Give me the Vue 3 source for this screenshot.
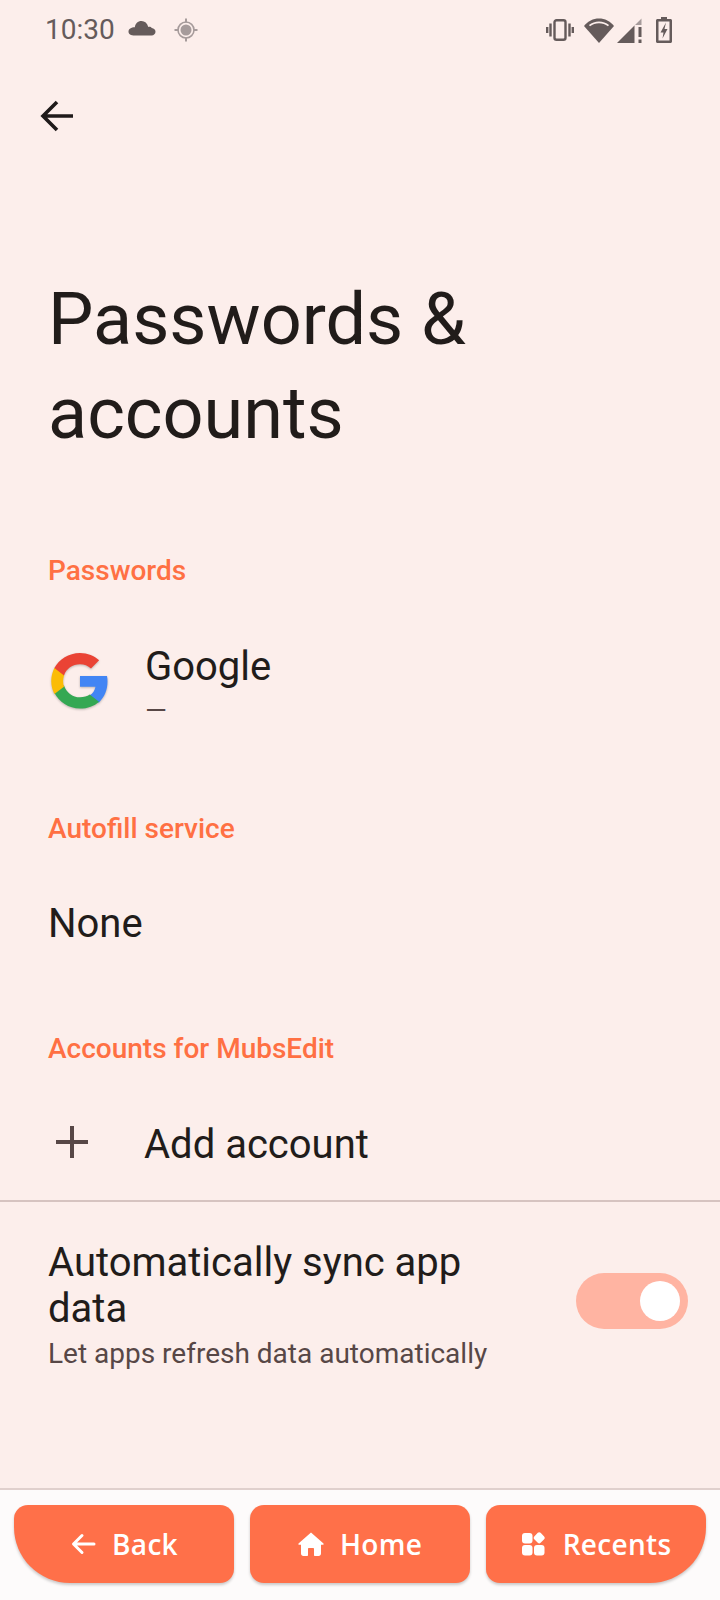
<template>
  <div class="screen">
    <div class="status">
      <div class="status-left">
        <span class="time">10:30</span>
        <svg class="cloud" width="28" height="16" viewBox="0 0 28 16"><path d="M7 15.500h16.500c2.400 0 4-1.700 4-3.700 0-2.100-1.600-3.600-3.700-3.800C23 6.800 21.500 6.500 20.300 7 19.300 3 16.800 1 13.500 1 9.800 1 7.200 3.500 6.800 7.300 3.200 7.300.5 8.900.5 11.700c0 2.300 2.200 3.800 6.500 3.800z" fill="#655b5b"/></svg>
        <svg class="gps" width="24" height="24" viewBox="0 0 24 24"><circle cx="12" cy="12" r="5.500" fill="#a69b9b"/><circle cx="12" cy="12" r="8" fill="none" stroke="#a69b9b" stroke-width="1.600"/><path d="M12 .5v4M12 19.500v4M.5 12h4M19.500 12h4" stroke="#a69b9b" stroke-width="2"/></svg>
      </div>
      <div class="status-right">
        <svg class="vib" width="28" height="22" viewBox="0 0 28 22"><rect x="8.500" y="1.200" width="11" height="19.600" rx="2" fill="none" stroke="#655b5b" stroke-width="2.400"/><path d="M4.500 4.500v13M1.200 8v6M23.500 4.500v13M26.800 8v6" stroke="#655b5b" stroke-width="2.400"/></svg>
        <svg class="wifi" width="30" height="25" viewBox="0 0 30 25"><path d="M0 8C4 3 9 .5 15 .5S26 3 30 8L15 25z" fill="#655b5b"/><path d="M5.500 7.600C8.200 5.400 11.300 4.300 15 4.300s6.800 1.100 9.500 3.300" fill="none" stroke="#fceeeb" stroke-width="1.800"/></svg>
        <svg class="signal" width="25" height="25" viewBox="0 0 25 25"><path d="M0 25 L17.500 7.500V25z" fill="#655b5b"/><path d="M17.500 7.500 24.500 .5v6.500h-7z" fill="#a69b9b"/><rect x="21.500" y="9" width="3" height="10" fill="#655b5b"/><rect x="21.500" y="21.500" width="3" height="3.500" fill="#655b5b"/></svg>
        <svg class="batt" width="16" height="26" viewBox="0 0 16 26"><path d="M5 0h6v2h3.500c.8 0 1.500.7 1.500 1.500v21c0 .8-.7 1.500-1.500 1.500h-13C.7 26 0 25.300 0 24.500v-21C0 2.700.7 2 1.500 2H5z" fill="#655b5b"/><rect x="2.500" y="4.500" width="11" height="19" fill="#fceeeb"/><path d="M10 5.500 4.500 15.500h3l-1 6 5-9.500h-3z" fill="#655b5b"/></svg>
      </div>
    </div>

    <div class="toolbar">
      <svg width="34" height="34" viewBox="0 0 34 34"><path d="M33 17H4M17 3 3 17l14 14" fill="none" stroke="#1f1a1a" stroke-width="3.600"/></svg>
    </div>

    <h1 class="title">Passwords &amp;<br />accounts</h1>

    <div class="section-label first">Passwords</div>
    <div class="row google">
      <svg class="g-logo" width="60" height="60" viewBox="0 0 48 48">
        <path fill="#4285F4" d="M46 24.500c0-1.600-.1-3.100-.4-4.500H24v8.500h12.400c-.5 2.900-2.100 5.300-4.600 6.900v5.700h7.400C43.500 36.700 46 31.100 46 24.500z"/>
        <path fill="#34A853" d="M24 46c6.200 0 11.400-2 15.200-5.500l-7.400-5.700c-2 1.400-4.700 2.200-7.800 2.200-6 0-11-4-12.800-9.500H3.500v5.900C7.200 40.800 15 46 24 46z"/>
        <path fill="#FBBC05" d="M11.200 28.500c-.5-1.400-.7-2.900-.7-4.500s.3-3.100.7-4.500v-5.900H3.500C2 16.600 1 20.200 1 24s1 7.400 2.500 10.400z"/>
        <path fill="#EA4335" d="M24 10.500c3.400 0 6.400 1.200 8.800 3.400l6.500-6.500C35.400 3.800 30.200 1.500 24 1.500 15 1.500 7.200 6.700 3.500 13.600l7.700 5.900C13 14 18 10.500 24 10.500z"/>
      </svg>
      <div class="row-text">
        <div class="row-title">Google</div>
        <div class="row-sub">—</div>
      </div>
    </div>

    <div class="section-label autofill">Autofill service</div>
    <div class="row none"><div class="row-title">None</div></div>

    <div class="section-label accounts">Accounts for MubsEdit</div>
    <div class="row add">
      <svg class="plus" width="32" height="32" viewBox="0 0 32 32"><path d="M16 0v32M0 16h32" stroke="#574746" stroke-width="4"/></svg>
      <div class="row-title">Add account</div>
    </div>

    <div class="sync">
      <div class="sync-text">
        <div class="row-title sync-title">Automatically sync app data</div>
        <div class="sync-sub">Let apps refresh data automatically</div>
      </div>
      <div class="switch"><span class="knob"></span></div>
    </div>

    <div class="spacer"></div>

    <div class="nav">
      <button class="nav-btn" v-for="b in buttons" :key="b.label" :class="b.cls">
        <svg width="26" height="26" viewBox="0 0 26 26" v-html="b.icon"></svg>
        <span>{{ b.label }}</span>
      </button>
    </div>
  </div>
</template>

<script setup>
const buttons = [
  {
    label: 'Back',
    cls: 'left',
    icon: '<path d="M24 13H4M12 4.500 3.500 13l8.500 8.500" fill="none" stroke="#fff" stroke-width="3" stroke-linecap="round" stroke-linejoin="round"/>'
  },
  {
    label: 'Home',
    cls: 'mid',
    icon: '<path d="M13 1.500 .5 12.500c-.3.700 0 1.300.7 1.300H3v8.700C3 23.900 4 25 5.300 25h3.700c.6 0 1-.4 1-1v-6c0-.6.400-1 1-1h4c.6 0 1 .4 1 1v6c0 .6.400 1 1 1h3.700c1.300 0 2.300-1.100 2.300-2.500v-8.700h1.800c.7 0 1-.6.700-1.300z" fill="#fff"/>'
  },
  {
    label: 'Recents',
    cls: 'right',
    icon: '<rect x="1" y="2" width="10.500" height="10.500" rx="3" fill="#fff"/><rect x="13.700" y="2.300" width="9" height="9" rx="2" transform="rotate(45 18.200 6.800)" fill="#fff"/><rect x="1" y="14" width="10.500" height="10.500" rx="3" fill="#fff"/><rect x="13" y="14" width="10.500" height="10.500" rx="3" fill="#fff"/>'
  }
]
</script>

<style>
body {
  margin: 0;
}
</style>

<style scoped>
.screen {
  width: 720px;
  height: 1600px;
  background: #fceeeb;
  display: flex;
  flex-direction: column;
  font-family: Roboto, sans-serif;
  color: #211a19;
  overflow: hidden;
}
.status {
  height: 60px;
  padding: 0 48px 0 45px;
  display: flex;
  justify-content: space-between;
  align-items: center;
}
.status-left {
  display: flex;
  align-items: center;
}
.time {
  font-size: 28px;
  color: #655b5b;
  line-height: 32px;
}
.cloud {
  margin-left: 13px;
  margin-bottom: 4px;
}
.gps {
  margin-left: 18px;
}
.status-right {
  display: flex;
  align-items: center;
}
.wifi {
  margin-left: 10px;
}
.signal {
  margin-left: 3px;
}
.batt {
  margin-left: 14px;
}
.toolbar {
  height: 54px;
  padding: 39px 0 0 40px;
}
.title {
  margin: 120px 0 0 48px;
  font-size: 72px;
  font-weight: 400;
  line-height: 94px;
  color: #211c1a;
}
.section-label {
  margin-left: 48px;
  font-size: 28px;
  font-weight: 500;
  line-height: 32px;
  color: #ff7043;
}
.section-label.first {
  margin-top: 94px;
}
.section-label.autofill {
  margin-top: 89px;
}
.section-label.accounts {
  margin-top: 84px;
}
.row {
  display: flex;
  align-items: center;
  padding-left: 48px;
}
.row-title {
  font-size: 40px;
  line-height: 50px;
  color: #211c1a;
}
.row-sub {
  margin-top: 6px;
  font-size: 28px;
  line-height: 26px;
  color: #574746;
}
.google {
  margin-top: 55px;
}
.g-logo {
  margin: 0 35px 4px 2px;
  filter: drop-shadow(0 1px 1px rgba(0, 0, 0, 0.25));
}
.none {
  margin-top: 54px;
}
.add {
  margin-top: 55px;
  padding-bottom: 30px;
  border-bottom: 2px solid #d6c3c0;
}
.plus {
  margin: 0 56px 6px 8px;
}
.sync {
  display: flex;
  align-items: center;
  justify-content: space-between;
  padding: 38px 32px 0 48px;
}
.sync-text {
  width: 440px;
}
.sync-title {
  line-height: 46px;
}
.sync-sub {
  margin-top: -1px;
  font-size: 28px;
  line-height: 46px;
  color: #574746;
  white-space: nowrap;
}
.switch {
  width: 112px;
  height: 56px;
  margin-bottom: 15px;
  border-radius: 28px;
  background: #ffb4a2;
  display: flex;
  justify-content: flex-end;
  align-items: center;
  padding-right: 8px;
  box-sizing: border-box;
}
.knob {
  width: 40px;
  height: 40px;
  border-radius: 50%;
  background: #fff;
}
.spacer {
  flex: 1;
}
.nav {
  height: 112px;
  box-sizing: border-box;
  border-top: 2px solid #e0d0cd;
  background: #fdfbfb;
  display: flex;
  gap: 16px;
  padding: 15px 14px 0;
}
.nav-btn {
  flex: 1;
  height: 78px;
  border: 0;
  background: #ff7049;
  color: #fff;
  font-family: "Open Sans", sans-serif;
  font-size: 28px;
  font-weight: 600;
  letter-spacing: 0.3px;
  display: flex;
  align-items: center;
  justify-content: center;
  gap: 16px;
  box-shadow: 0 2px 3px rgba(0, 0, 0, 0.2);
  padding: 0;
}
.nav-btn.left {
  border-radius: 14px 14px 14px 56px;
}
.nav-btn.mid {
  border-radius: 14px;
}
.nav-btn.right {
  border-radius: 14px 14px 56px 14px;
}
</style>
